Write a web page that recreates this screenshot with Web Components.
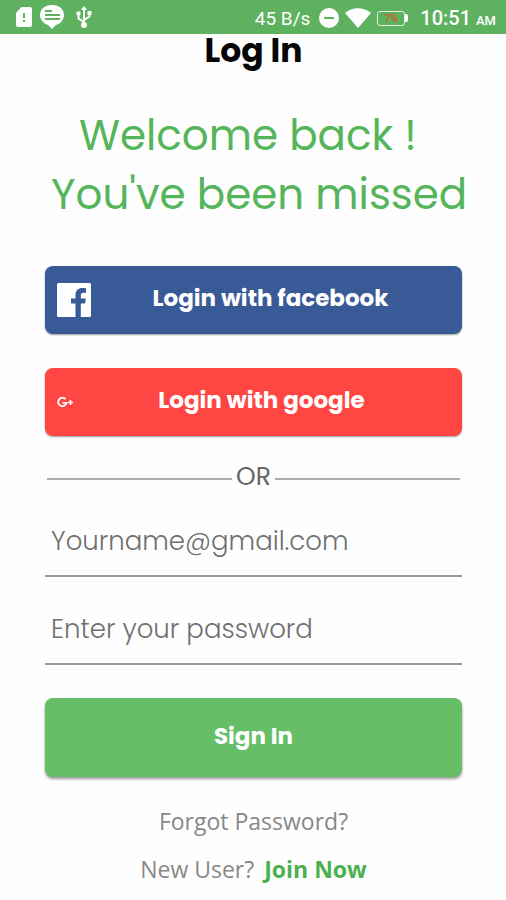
<!DOCTYPE html>
<html lang="en">
<head>
<meta charset="utf-8">
<meta name="viewport" content="width=device-width, initial-scale=1">
<title>Log In</title>
<style>
    body {
        margin: 0;
        background: #fefefe;
        font-family: Poppins, Inter, sans-serif;
    }
</style>
</head>
<body>
<login-page></login-page>

<script>
class StatusBar extends HTMLElement {
    constructor () {
        super();
        const root = this.attachShadow({mode: 'open'});

        root.innerHTML = `${this.buildStyle()}
            <div class="group left">${this.buildNotifications()}</div>
            <div class="group right">
                <span class="speed">45 B/s</span>
                ${this.buildIndicators()}
                <span class="time">10:51 <small>AM</small></span>
            </div>`;
    }

    /**
     * Sim card, message and usb icons
     * @returns {string}
     */
    buildNotifications() {
        return `
            <svg width="16" height="20" viewBox="0 0 16 20" aria-hidden="true">
                <path d="M5.5 0H14a2 2 0 0 1 2 2v16a2 2 0 0 1-2 2H2a2 2 0 0 1-2-2V6z" fill="#fff"/>
                <path d="M8 6v5M8 13v2" stroke="#5db15f" stroke-width="2"/>
            </svg>
            <svg width="24" height="24" viewBox="0 0 24 24" aria-hidden="true">
                <path d="M12 0c7 0 12 4 12 10 0 5-4 9-8 10l-4 4-4-4C4 19 0 15 0 10 0 4 5 0 12 0z" fill="#fff"/>
                <path d="M5 6h7M5 10h15M5 14h15" stroke="#5db15f" stroke-width="2"/>
            </svg>
            <svg class="usb" width="16" height="22" viewBox="0 0 16 22" fill="none" stroke="#fff" stroke-width="2" aria-hidden="true">
                <path d="M8 3v15M8 16l-5.500-3.500V8M8 14l5.500-3.500V7"/>
                <path d="M8 0l3 4H5z" fill="#fff" stroke="none"/>
                <circle cx="8" cy="19" r="3" fill="#fff" stroke="none"/>
                <circle cx="2.500" cy="7.500" r="2.200" fill="#fff" stroke="none"/>
                <path d="M11.500 5h4v4h-4z" fill="#fff" stroke="none"/>
            </svg>`;
    }

    /**
     * Do not disturb, wifi and battery icons
     * @returns {string}
     */
    buildIndicators() {
        return `
            <svg width="20" height="20" viewBox="0 0 20 20" aria-hidden="true">
                <circle cx="10" cy="10" r="10" fill="#fff"/>
                <path d="M5 10h10" stroke="#5db15f" stroke-width="2"/>
            </svg>
            <svg width="26" height="20" viewBox="0 0 26 20" aria-hidden="true">
                <path d="M0 5C7-1.500 19-1.500 26 5L13 20z" fill="#fff"/>
            </svg>
            <span class="battery"><span>7%</span></span>`;
    }

    buildStyle() {
        return `<style>
            :host {
                display: flex;
                justify-content: space-between;
                align-items: center;
                height: 34px;
                padding: 0 10px 0 16px;
                background: #5db15f;
                color: #fff;
                font-family: Roboto, sans-serif;
                white-space: nowrap;
            }

            .group {
                display: flex;
                align-items: center;
                gap: 8px;
            }

            .usb {
                margin-left: 4px;
            }

            .right {
                gap: 6px;
                padding-top: 2px;
            }

            .speed {
                font-size: 19px;
                margin-right: 3px;
            }

            .battery {
                display: flex;
                align-items: center;
            }

            .battery span {
                width: 26px;
                height: 13px;
                border: 1px solid #e3efe0;
                border-radius: 3px;
                color: #d0602c;
                font-size: 10px;
                font-weight: 700;
                line-height: 13px;
                text-align: center;
            }

            .battery::after {
                content: '';
                width: 3px;
                height: 8px;
                background: #fff;
                border-radius: 0 2px 2px 0;
            }

            .time {
                font-size: 20px;
                font-weight: 500;
                margin-left: 6px;
            }

            small {
                font-size: 13px;
            }
        </style>`;
    }
}

class SocialButton extends HTMLElement {
    constructor () {
        super();
        const root = this.attachShadow({mode: 'open'});

        root.innerHTML = `<style>
            :host {
                display: block;
            }

            button {
                display: flex;
                align-items: center;
                width: 100%;
                height: 68px;
                padding: 0 12px;
                border: 0;
                border-radius: 8px;
                background: var(--button-color);
                box-shadow: 0 1px 2px rgba(0, 0, 0, .4);
                color: #fff;
                font: 700 23px/32px Poppins, Inter, sans-serif;
            }

            .label {
                flex: 1;
                padding-bottom: 4px;
            }
        </style>
        <button type="button">
            <slot name="icon"></slot>
            <span class="label"><slot></slot></span>
        </button>`;
    }
}

class OrDivider extends HTMLElement {
    constructor () {
        super();
        const root = this.attachShadow({mode: 'open'});

        root.innerHTML = `<style>
            :host {
                display: flex;
                align-items: center;
                gap: 4px;
                padding: 0 2px;
                color: #666;
                font-size: 25px;
                line-height: 32px;
            }

            :host::before,
            :host::after {
                content: '';
                flex: 1;
                height: 2px;
                margin-top: 4px;
                background: #adadad;
            }
        </style>
        <slot></slot>`;
    }
}

class TextField extends HTMLElement {
    constructor () {
        super();
        const type = this.getAttribute('type') || 'text';
        const hint = this.getAttribute('hint') || '';
        const label = this.getAttribute('label') || hint;
        const root = this.attachShadow({mode: 'open'});

        root.innerHTML = `<style>
            :host {
                display: block;
            }

            input {
                display: block;
                box-sizing: border-box;
                width: 100%;
                height: 72px;
                padding: 2px 6px 0;
                border: 0;
                border-bottom: 2px solid #999;
                border-radius: 0;
                outline: 0;
                background: none;
                color: #444;
                font: 300 26px/32px Poppins, Inter, sans-serif;
            }

            input::placeholder {
                color: #707070;
                opacity: 1;
            }
        </style>
        <input type="${type}" placeholder="${hint}" aria-label="${label}">`;
    }
}

class SubmitButton extends HTMLElement {
    constructor () {
        super();
        const root = this.attachShadow({mode: 'open'});

        root.innerHTML = `<style>
            :host {
                display: block;
            }

            button {
                width: 100%;
                height: 79px;
                padding: 0 12px 4px;
                border: 0;
                border-radius: 8px;
                background: #66be66;
                box-shadow: 0 2px 3px rgba(0, 0, 0, .4);
                color: #fff;
                font: 700 23px/32px Poppins, Inter, sans-serif;
            }
        </style>
        <button type="submit"><slot></slot></button>`;
    }
}

class LoginPage extends HTMLElement {
    constructor () {
        super();
        const root = this.attachShadow({mode: 'open'});

        root.innerHTML = `${this.buildStyle()}
        <status-bar></status-bar>
        <main>
            <h1>Log In</h1>
            <p class="welcome">Welcome back ! \n You've been missed</p>
            <div class="social">
                <social-button class="facebook">
                    ${this.buildFacebook()}
                    Login with facebook
                </social-button>
                <social-button class="google">
                    ${this.buildGoogle()}
                    Login with google
                </social-button>
            </div>
            <or-divider>OR</or-divider>
            <form>
                <text-field type="email" label="Email" hint="Yourname@gmail.com"></text-field>
                <text-field type="password" label="Password" hint="Enter your password"></text-field>
                <submit-button>Sign In</submit-button>
            </form>
            <footer>
                <a href="#forgot">Forgot Password?</a>
                <div class="join"><span>New User?</span><a href="#join">Join Now</a></div>
            </footer>
        </main>`;
    }

    buildFacebook() {
        return `<svg slot="icon" width="34" height="34" viewBox="0 0 34 34" aria-hidden="true">
            <rect width="34" height="34" rx="1.500" fill="#fff"/>
            <path d="M18.500 34V20.500H14v-5h4.500V12c0-4.700 2.800-7 7-7 1.500 0 2.500.1 3.500.2v4.600h-2.500c-2 0-2.700.9-2.700 2.500v3.200h5l-.7 5h-4.300V34z" fill="#385a96"/>
        </svg>`;
    }

    buildGoogle() {
        return `<svg slot="icon" width="16" height="16" viewBox="0 0 16 16" fill="none" stroke="#fff" aria-hidden="true">
            <path d="M8.600 5.200A4.200 4.200 0 1 0 9.500 8.900H5.500" stroke-width="1.800"/>
            <path d="M13.500 6v5M11 8.500h5" stroke-width="1.600"/>
        </svg>`;
    }

    buildStyle() {
        return `<style>
            :host {
                display: block;
            }

            main {
                padding: 0 44px 12px 45px;
            }

            h1 {
                margin: 0;
                color: #060606;
                font-size: 33px;
                font-weight: 700;
                line-height: 34px;
                text-align: center;
            }

            .welcome {
                display: flex;
                justify-content: center;
                margin: 38px 0 0;
                color: #55b55b;
                font-size: 42px;
                font-weight: 400;
                line-height: 59px;
                text-align: center;
                white-space: pre;
            }

            .social {
                display: grid;
                gap: 34px;
                margin-top: 42px;
            }

            .facebook {
                --button-color: #385a96;
            }

            .google {
                --button-color: #ff4642;
            }

            or-divider {
                margin-top: 25px;
            }

            form {
                display: grid;
                gap: 16px;
                margin-top: 12px;
            }

            submit-button {
                margin-top: 17px;
            }

            footer {
                display: grid;
                justify-items: center;
                gap: 16px;
                margin-top: 28px;
                color: #888;
                font-family: "Open Sans", sans-serif;
                font-size: 23px;
                line-height: 32px;
            }

            a {
                color: inherit;
                text-decoration: none;
            }

            .join {
                display: flex;
                gap: 10px;
            }

            .join a {
                color: #4bb050;
                font-weight: 700;
            }
        </style>`;
    }
}

customElements.define('status-bar', StatusBar);
customElements.define('social-button', SocialButton);
customElements.define('or-divider', OrDivider);
customElements.define('text-field', TextField);
customElements.define('submit-button', SubmitButton);
customElements.define('login-page', LoginPage);
</script>
</body>
</html>
